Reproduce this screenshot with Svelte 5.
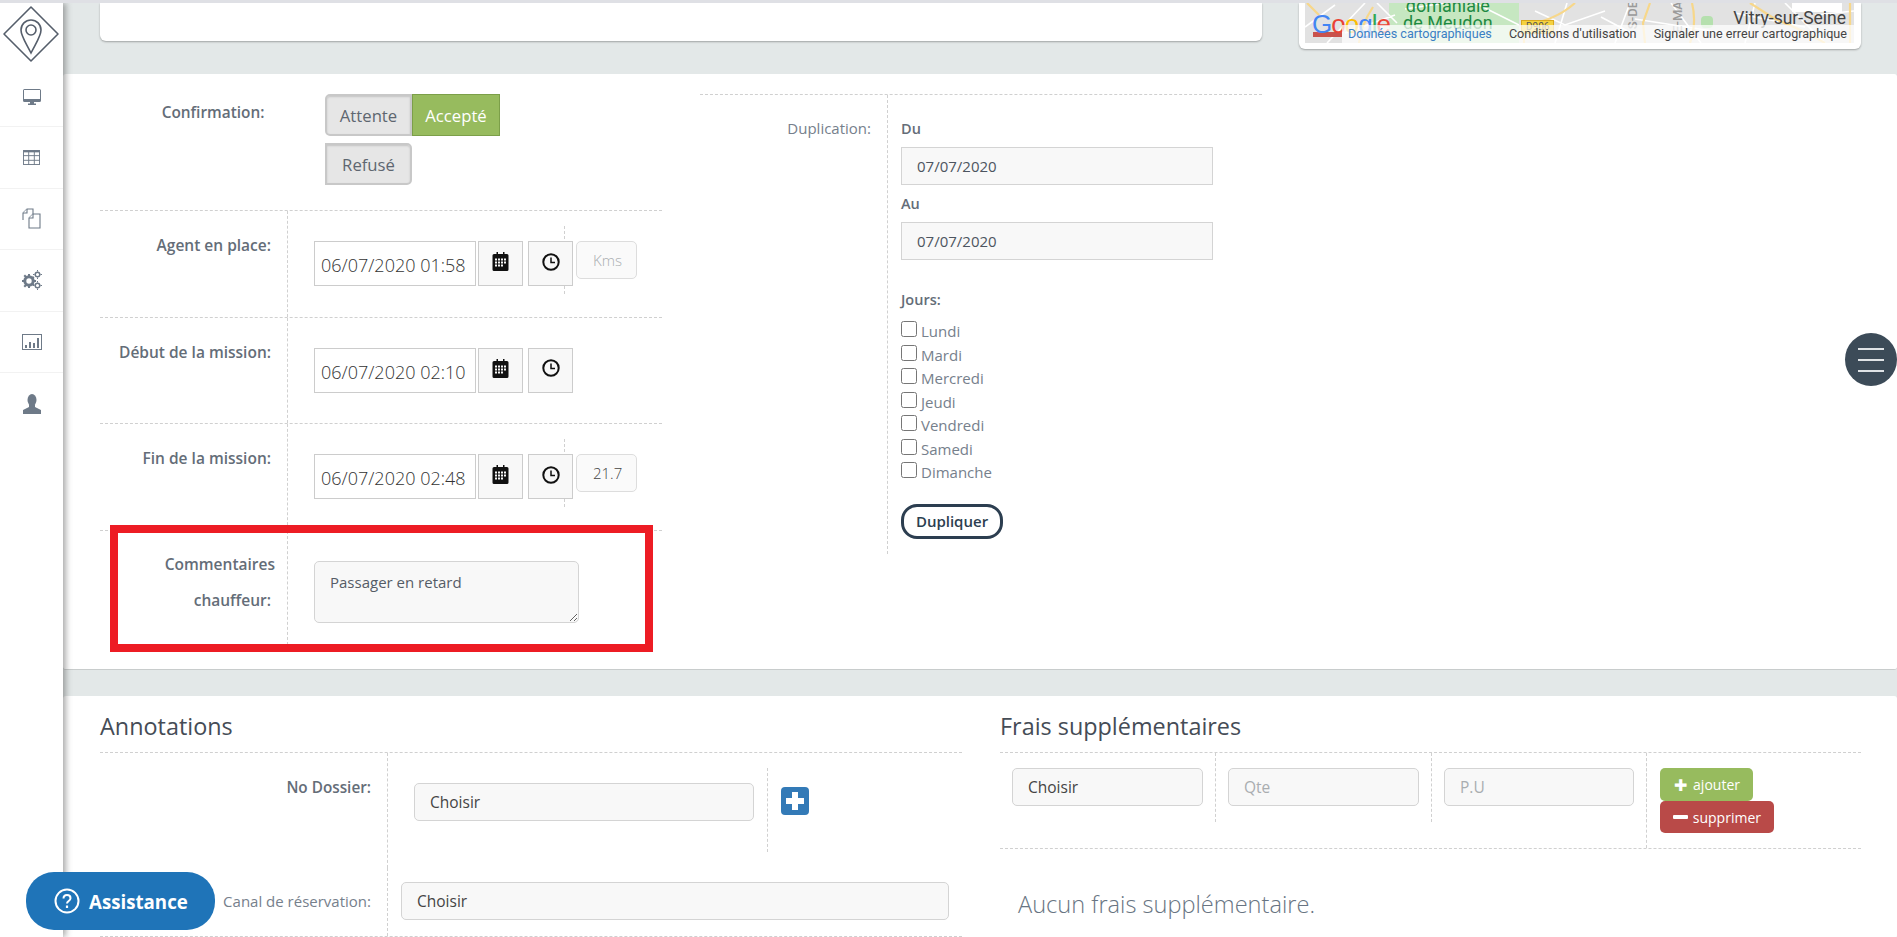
<script>
  const days = ['Lundi', 'Mardi', 'Mercredi', 'Jeudi', 'Vendredi', 'Samedi', 'Dimanche'];
  const missions = [
    { label: 'Agent en place:', value: '06/07/2020 01:58', kms: '', placeholder: 'Kms' },
    { label: 'Début de la mission:', value: '06/07/2020 02:10' },
    { label: 'Fin de la mission:', value: '06/07/2020 02:48', kms: '21.7', placeholder: 'Kms' }
  ];
</script>

<div class="page">
  <nav class="sidebar">
    <div class="logo">
      <svg viewBox="0 0 63 62" width="63" height="62" fill="none" stroke="#555e6b" stroke-width="1.6">
        <path d="M31 4 58 31 31 58 4 31Z" stroke-linejoin="round" />
        <path d="M31 17c-5.500 0-10 4.500-10 10 0 6 5 13 10 23 5-10 10-17 10-23 0-5.500-4.500-10-10-10Z" />
        <circle cx="31" cy="27" r="5" />
      </svg>
    </div>
    <div class="nav-item first">
      <svg viewBox="0 0 18 16" width="18" height="16" fill="#6e7a88">
        <path fill-rule="evenodd" d="M1.500 0h15A1.500 1.500 0 0 1 18 1.500v10a1.500 1.500 0 0 1-1.500 1.500h-15A1.500 1.500 0 0 1 0 11.500v-10A1.500 1.500 0 0 1 1.500 0Zm-.5 1v9h16V1Z" />
        <path d="M7 13h4v1.500h2V16H5v-1.500h2Z" />
      </svg>
    </div>
    <div class="nav-item">
      <svg viewBox="0 0 18 16" width="17" height="15" fill="none" stroke="#6e7a88">
        <rect x=".5" y=".5" width="17" height="15" fill="#fff" />
        <path d="M.5 1.500h17" stroke-width="2" />
        <path d="M6 1v15M12 1v15M0 6h18M0 11h18" />
      </svg>
    </div>
    <div class="nav-item">
      <svg viewBox="0 0 19 21" width="19" height="21" fill="#fff" stroke="#6e7a88" stroke-width="1.1">
        <path d="M1 12V5l4-4h6v5" />
        <path d="M1 5h4V1" />
        <path d="M7 20V10l4-4h7v14Z" />
        <path d="M7 10h4V6" />
      </svg>
    </div>
    <div class="nav-item">
      <svg viewBox="0 0 20 20" width="20" height="20" fill="#6e7a88">
        <circle cx="7" cy="11" r="4.200" fill="none" stroke="#6e7a88" stroke-width="3" />
        <path d="M6 4h2v3H6zM6 15h2v3H6zM0 10h3v2H0zM11 10h3v2h-3zM1.500 6l1.500-1.500 2 2L3.500 8zM9 14l1.500-1.500 2 2L11 16zM1.500 16 3.500 14l1.500 1.500-2 2zM9 8l2-2 1.500 1.500-2 2z" />
        <circle cx="15.500" cy="4.500" r="2.300" fill="none" stroke="#6e7a88" stroke-width="1.500" />
        <circle cx="15.500" cy="15.500" r="2.300" fill="none" stroke="#6e7a88" stroke-width="1.500" />
        <path d="M15 0h1v1.500h-1zM15 7.500h1V9h-1zM11 4h1.500v1H11zM18.500 4H20v1h-1.500zM15 11h1v1.500h-1zM15 18.500h1V20h-1zM11 15h1.500v1H11zM18.500 15H20v1h-1.500z" />
      </svg>
    </div>
    <div class="nav-item">
      <svg viewBox="0 0 20 16" width="20" height="16" fill="#6e7a88">
        <path fill-rule="evenodd" d="M0 0h20v16H0Zm1 1v14h18V1Z" />
        <path d="M3 11h2v3H3zM7 8h2v6H7zM11 9h2v5h-2zM15 4h2v10h-2z" />
      </svg>
    </div>
    <div class="nav-item last">
      <svg viewBox="0 0 20 20" width="20" height="20" fill="#6e7a88">
        <ellipse cx="10" cy="6" rx="4.500" ry="6" />
        <path d="M7 11h6v2l6 3v4H1v-4l6-3Z" />
      </svg>
    </div>
  </nav>

  <main class="content">
    <div class="top">
      <div class="top-card"></div>
      <div class="map-card">
        <div class="map">
          <svg viewBox="0 0 549 40" width="549" height="40">
            <rect width="549" height="40" fill="#e2e2e2" />
            <rect x="84" width="130" height="40" fill="#c6e7c1" />
            <rect x="396" y="13" width="12" height="12" rx="4" fill="#b5e0ae" />
            <g fill="none" stroke="#fff" stroke-width="1.600">
              <path d="M0 24 30 2M22 40 60 0M40 30 90 12M72 0 92 20M100 6 140 0M170 0 214 22M230 8 260 22 300 8M250 40 262 0M310 40 325 0M330 16 420 30M366 0 396 40M430 10 500 24M480 0 520 40M510 12 549 8M296 14 330 32M450 0 440 40" />
            </g>
            <g fill="none" stroke="#f7d78a" stroke-width="2.200">
              <path d="M2 0 14 12M54 40Q56 22 68 4M219 40V22Q250 18 270 0M345 0 338 20 340 40M387 0Q392 20 385 40M445 0 470 16Q500 28 520 40M545 0V40" />
            </g>
            <rect x="8" y="29" width="29" height="5" fill="#c9524c" />
          </svg>
          <span class="map-place wood">domaniale<br />de Meudon</span>
          <span class="map-road">D906</span>
          <span class="map-vert one">S-DE</span>
          <span class="map-vert two">E-MA</span>
          <span class="map-blank"></span>
          <span class="map-place city">Vitry-sur-Seine</span>
          <span class="google"><b class="g-b">G</b><b class="g-r">o</b><b class="g-y">o</b><b class="g-b">g</b><b class="g-g">l</b><b class="g-r">e</b></span>
          <div class="map-links">
            <span class="map-data">Données cartographiques</span>
            <span>Conditions d'utilisation</span>
            <span>Signaler une erreur cartographique</span>
          </div>
        </div>
      </div>
    </div>

    <section class="panel details">
      <div class="col-left">
        <div class="confirm">
          <div class="confirm-label">Confirmation:</div>
          <div class="confirm-btns">
            <button class="toggle">Attente</button><button class="toggle on">Accepté</button>
            <button class="toggle refuse">Refusé</button>
          </div>
        </div>

        {#each missions as m}
          <div class="row">
            <div class="row-label">{m.label}</div>
            <div class="row-body">
              <input class="date" value={m.value} />
              <span class="addon">
                <svg viewBox="0 0 16 19" width="17" height="19">
                  <path d="M1.500 2H4V0h1.500v2h5V0H12v2h2.500A1.500 1.500 0 0 1 16 3.500v14a1.500 1.500 0 0 1-1.500 1.500h-13A1.500 1.500 0 0 1 0 17.500v-14A1.500 1.500 0 0 1 1.500 2Z" fill="#111" />
                  <path d="M2.500 6.500h2v2h-2zM5.500 6.500h2v2h-2zM8.500 6.500h2v2h-2zM11.500 6.500h2v2h-2zM2.500 9.500h2v2h-2zM5.500 9.500h2v2h-2zM8.500 9.500h2v2h-2zM11.500 9.500h2v2h-2zM2.500 12.500h2v2h-2zM5.500 12.500h2v2h-2zM8.500 12.500h2v2h-2z" fill="#f8f8f8" />
                </svg>
              </span>
              <span class="addon clock">
                <svg viewBox="0 0 18 18" width="18" height="18" fill="none" stroke="#111">
                  <circle cx="9" cy="9" r="7.700" stroke-width="2" />
                  <path d="M9 4.500V9.500H13" stroke-width="1.500" />
                </svg>
              </span>
              {#if m.placeholder}
                <span class="km-cell">
                  <input class="kms" placeholder={m.placeholder} value={m.kms} />
                </span>
              {/if}
            </div>
          </div>
        {/each}

        <div class="row comment">
          <div class="row-label"><span class="over">Commentaires</span><br />chauffeur:</div>
          <div class="row-body">
            <textarea class="comment-box">Passager en retard</textarea>
          </div>
        </div>
      </div>

      <div class="col-right">
        <div class="dup-label">Duplication:</div>
        <div class="dup-body">
          <div class="dup-title">Du</div>
          <input class="dup-date" value="07/07/2020" />
          <div class="dup-title au">Au</div>
          <input class="dup-date" value="07/07/2020" />
          <div class="dup-title jours">Jours:</div>
          <div class="days">
            {#each days as day}
              <label class="day"><input type="checkbox" />{day}</label>
            {/each}
          </div>
          <button class="dup-btn">Dupliquer</button>
        </div>
      </div>

      <div class="red-mark"></div>
    </section>

    <div class="gap"></div>

    <section class="panel bottom">
      <div class="annotations">
        <h2>Annotations</h2>
        <div class="note-row first-note">
          <div class="note-label strong">No Dossier:</div>
          <div class="note-body">
            <select class="pick dossier"><option>Choisir</option></select>
            <span class="plus-cell">
              <svg viewBox="0 0 28 28" width="28" height="28">
                <rect width="28" height="28" rx="4" fill="#337ab7" />
                <path d="M11 5h6v6h6v6h-6v6h-6v-6H5v-6h6Z" fill="#fff" />
              </svg>
            </span>
          </div>
        </div>
        <div class="note-row second-note">
          <div class="note-label">Canal de réservation:</div>
          <div class="note-body">
            <select class="pick canal"><option>Choisir</option></select>
          </div>
        </div>
      </div>

      <div class="fees">
        <h2>Frais supplémentaires</h2>
        <div class="fee-row">
          <div class="fee-cell"><select class="pick"><option>Choisir</option></select></div>
          <div class="fee-cell"><input class="pick" placeholder="Qte" /></div>
          <div class="fee-cell"><input class="pick" placeholder="P.U" /></div>
          <div class="fee-actions">
            <button class="act add"><span class="sign">✚</span>ajouter</button>
            <button class="act del"><span class="sign minus"></span>supprimer</button>
          </div>
        </div>
        <p class="no-fees">Aucun frais supplémentaire.</p>
      </div>
    </section>
  </main>

  <button class="assist">
    <svg viewBox="0 0 26 26" width="26" height="26" fill="none" stroke="#fff">
      <circle cx="13" cy="13" r="11.500" stroke-width="2" />
      <path d="M9.500 10.500c0-2.300 1.500-3.500 3.500-3.500s3.500 1.200 3.500 3.200c0 2.800-3.500 2.800-3.500 5.300" stroke-width="2" />
      <path d="M13 17.500v2.500" stroke-width="2.200" />
    </svg>
    Assistance
  </button>

  <div class="burger"><span></span><span></span><span></span></div>
</div>

<style>
  :global(body) {
    margin: 0;
    overflow: hidden;
  }

  .page {
    position: relative;
    display: flex;
    height: 934px;
    overflow: hidden;
    border-top: 3px solid #dfe0e5;
    background: #e3e8e8;
    color: #646d78;
    font-family: "Open Sans", sans-serif;
    font-size: 15px;
  }

  button, input, select, textarea {
    font-family: inherit;
    box-sizing: border-box;
  }

  input::placeholder {
    color: #a9adb0;
  }

  /* sidebar */
  .sidebar {
    position: relative;
    z-index: 2;
    flex: none;
    width: 63px;
    background: #fff;
    box-shadow: 3px 0 6px rgba(70, 70, 70, 0.45);
  }

  .logo {
    height: 64px;
  }

  .nav-item {
    display: flex;
    align-items: center;
    justify-content: center;
    height: 61.500px;
    border-bottom: 1px solid #f2f2f2;
    box-sizing: border-box;
  }

  .nav-item.first {
    height: 60px;
  }

  .nav-item.last {
    border-bottom: 0;
  }

  /* top strip */
  .content {
    flex: 1;
    min-width: 0;
  }

  .top {
    display: flex;
    gap: 37px;
    height: 71px;
    padding-left: 37px;
    box-sizing: border-box;
  }

  .top-card {
    width: 1162px;
    height: 38px;
    background: #fff;
    border-radius: 0 0 6px 6px;
    box-shadow: 0 1px 2px rgba(0, 0, 0, 0.3);
  }

  .map-card {
    width: 562px;
    height: 46px;
    padding: 0 6px;
    box-sizing: border-box;
    background: #fff;
    border-radius: 0 0 6px 6px;
    box-shadow: 0 1px 2px rgba(0, 0, 0, 0.3);
  }

  .map {
    position: relative;
    width: 549px;
    height: 40px;
    overflow: hidden;
    font-family: Roboto, sans-serif;
  }

  .map svg {
    display: block;
  }

  .map-place {
    position: absolute;
    white-space: nowrap;
  }

  .wood {
    left: 98px;
    top: -5px;
    color: #1e8a43;
    font-size: 18px;
    line-height: 16.500px;
    text-align: center;
  }

  .city {
    right: 8px;
    top: 5px;
    color: #444;
    font-size: 17.500px;
    line-height: 20px;
  }

  .map-road {
    position: absolute;
    left: 216px;
    top: 17px;
    padding: 0 4px;
    background: #f5d23f;
    border: 1px solid #d9a81e;
    color: #555;
    font-size: 10px;
    line-height: 12px;
  }

  .map-vert {
    position: absolute;
    top: -2px;
    color: #9a9a9a;
    font-size: 13px;
    font-weight: 500;
    line-height: 13px;
    writing-mode: vertical-rl;
    transform: rotate(180deg);
  }

  .map-vert.one {
    left: 321px;
  }

  .map-vert.two {
    left: 366px;
  }

  .map-blank {
    position: absolute;
    right: 12px;
    top: 0;
    width: 50px;
    height: 9px;
    background: #fff;
  }

  .google {
    position: absolute;
    left: 7px;
    top: 6px;
    font-family: "Liberation Sans", sans-serif;
    font-size: 26px;
    line-height: 30px;
    letter-spacing: -1px;
  }

  .google b {
    font-weight: 400;
  }

  .g-b { color: #4285f4; }
  .g-r { color: #ea4335; }
  .g-y { color: #fbbc05; }
  .g-g { color: #34a853; }

  .map-links {
    position: absolute;
    left: 37px;
    right: 0;
    bottom: 0;
    display: flex;
    justify-content: space-between;
    height: 18px;
    padding: 0 7px 0 6px;
    box-sizing: border-box;
    background: rgba(255, 255, 255, 0.72);
    color: #444;
    font-size: 12.600px;
    line-height: 18px;
    white-space: nowrap;
  }

  .map-data {
    color: #3a7fc4;
  }

  /* main panel */
  .panel {
    background: #fff;
    box-sizing: border-box;
  }

  .details {
    position: relative;
    display: flex;
    gap: 38px;
    height: 596px;
    padding: 20px 0 0 37px;
    border-bottom: 1px solid #c8cccc;
    border-radius: 3px;
  }

  .col-left {
    width: 562px;
  }

  .confirm {
    display: grid;
    grid-template-columns: 164.500px 1fr;
    height: 116px;
    border-bottom: 1px dashed #d0d0d0;
  }

  .confirm-label {
    padding-top: 9px;
    text-align: right;
    font-size: 15.400px;
    font-weight: 600;
    line-height: 20px;
  }

  .confirm-btns {
    padding-left: 60.500px;
    width: 180px;
    font-size: 0;
  }

  .toggle {
    width: 87px;
    height: 42px;
    padding: 0;
    background: #e6e6e6;
    border: 2px solid #c8c8c8;
    border-radius: 5px 0 0 5px;
    box-shadow: inset 0 1px 2px rgba(0, 0, 0, 0.15);
    color: #5e6670;
    font-size: 16.700px;
    vertical-align: top;
  }

  .toggle.on {
    width: 88px;
    background: #97bb5e;
    border: 1px solid #7c9f49;
    border-radius: 0;
    box-shadow: none;
    color: #fff;
  }

  .toggle.refuse {
    margin-top: 7px;
    border-radius: 0 5px 5px 0;
  }

  .row {
    display: grid;
    grid-template-columns: 187px 1fr;
    height: 106.500px;
    box-sizing: border-box;
    border-bottom: 1px dashed #d0d0d0;
  }

  .row.comment {
    height: 114px;
    border-bottom: 0;
  }

  .row-label {
    padding: 24px 16px 0 0;
    text-align: right;
    font-size: 15.500px;
    font-weight: 600;
    line-height: 20px;
    color: #646d78;
  }

  .comment .row-label {
    padding: 15px 16px 0 0;
    line-height: 36px;
  }

  .over {
    margin-right: -4px;
  }

  .row-body {
    display: flex;
    align-items: flex-start;
    padding: 30px 0 0 26px;
    border-left: 1px dashed #d0d0d0;
  }

  .date {
    width: 162px;
    height: 45px;
    padding: 3px 0 0 6px;
    background: #fff;
    border: 1px solid #ccc;
    color: #333;
    font-size: 18px;
    font-weight: 300;
  }

  .addon {
    position: relative;
    z-index: 1;
    display: flex;
    align-items: center;
    justify-content: center;
    width: 45px;
    height: 45px;
    margin-left: 2px;
    padding-bottom: 4px;
    box-sizing: border-box;
    background: #f8f8f8;
    border: 1px solid #ccc;
  }

  .addon.clock {
    margin-left: 5px;
  }

  .km-cell {
    display: flex;
    align-items: flex-start;
    position: relative;
    margin-left: 3px;
  }

  .km-cell::before {
    content: "";
    position: absolute;
    left: -12px;
    top: -15px;
    height: 68px;
    border-left: 1px dashed #d0d0d0;
    z-index: 0;
  }

  .kms {
    position: relative;
    width: 61px;
    height: 38px;
    padding: 0 0 0 16px;
    background: #fafafa;
    border: 1px solid #ddd;
    border-radius: 5px;
    color: #444;
    font-size: 15px;
    font-weight: 300;
  }

  .comment-box {
    display: block;
    width: 265px;
    height: 62px;
    padding: 10px 15px;
    background: #f8f8f8;
    border: 1px solid #d4d4d4;
    border-radius: 5px;
    color: #555c66;
    font-size: 15px;
    outline: none;
  }

  .col-right {
    display: grid;
    grid-template-columns: 187px 1fr;
    align-self: flex-start;
    width: 562px;
    border-top: 1px dashed #d0d0d0;
  }

  .dup-label {
    padding: 23px 16px 0 0;
    text-align: right;
    color: #76808c;
    line-height: 20px;
  }

  .dup-body {
    height: 459px;
    padding: 24px 0 0 13px;
    border-left: 1px dashed #d0d0d0;
    box-sizing: border-box;
  }

  .dup-title {
    font-weight: 600;
    font-size: 14.500px;
    line-height: 20px;
    color: #646d78;
  }

  .dup-title.au {
    margin-top: 9px;
  }

  .dup-title.jours {
    margin-top: 30px;
  }

  .dup-date {
    display: block;
    width: 312px;
    height: 38px;
    margin-top: 8px;
    padding: 0 15px;
    background: #f8f8f8;
    border: 1px solid #d4d4d4;
    color: #4d5560;
    font-size: 15px;
  }

  .days {
    margin-top: 11px;
  }

  .day {
    display: flex;
    align-items: flex-start;
    height: 23.500px;
    color: #76808c;
    line-height: 20px;
  }

  .day input {
    width: 16px;
    height: 16px;
    margin: 0 4px 0 0;
  }

  .dup-btn {
    width: 102px;
    height: 35px;
    margin-top: 18px;
    padding: 0;
    background: #fff;
    border: 3px solid #2c3e50;
    border-radius: 16px;
    color: #2c3e50;
    font-size: 15px;
    font-weight: 600;
  }

  .red-mark {
    position: absolute;
    left: 47px;
    top: 451px;
    width: 543px;
    height: 127px;
    box-sizing: border-box;
    border: 8px solid #ed1c24;
  }

  .gap {
    height: 26px;
  }

  /* bottom panel */
  .bottom {
    display: flex;
    gap: 38px;
    height: 242px;
    padding-left: 37px;
    border-radius: 3px;
  }

  h2 {
    margin: 0;
    height: 57px;
    padding-top: 14px;
    box-sizing: border-box;
    border-bottom: 1px dashed #d0d0d0;
    color: #454c56;
    font-size: 23.400px;
    font-weight: 400;
    line-height: 32px;
  }

  .annotations {
    width: 862px;
  }

  .fees {
    width: 861px;
  }

  .note-row {
    display: grid;
    grid-template-columns: 287px 1fr;
  }

  .first-note {
    height: 115px;
  }

  .second-note {
    height: 68px;
    border-bottom: 1px dashed #d0d0d0;
  }

  .note-label {
    padding-right: 16px;
    text-align: right;
    line-height: 20px;
    color: #76808c;
  }

  .note-label.strong {
    padding-top: 24px;
    font-size: 15.300px;
    font-weight: 600;
    color: #646d78;
  }

  .second-note .note-label {
    padding-top: 23px;
  }

  .note-body {
    display: flex;
    align-items: flex-start;
    border-left: 1px dashed #d0d0d0;
  }

  .pick {
    display: block;
    width: 100%;
    height: 38px;
    padding: 0 15px;
    appearance: none;
    -webkit-appearance: none;
    background: #f8f8f8;
    border: 1px solid #d4d4d4;
    border-radius: 5px;
    color: #444;
    font-size: 15.500px;
  }

  .pick.dossier {
    width: 340px;
    margin: 30px 0 0 26px;
  }

  .plus-cell {
    display: block;
    height: 84px;
    margin: 15px 0 0 13px;
    padding: 19px 0 0 13px;
    border-left: 1px dashed #d0d0d0;
    box-sizing: border-box;
  }

  .plus-cell svg {
    display: block;
  }

  .pick.canal {
    width: 548px;
    margin: 14px 0 0 13px;
  }

  .fee-row {
    display: grid;
    grid-template-columns: 216px 216px 215px 1fr;
    height: 95px;
    border-bottom: 1px dashed #d0d0d0;
  }

  .fee-cell {
    height: 69px;
    padding: 15px 12px 0 12px;
    box-sizing: border-box;
    border-right: 1px dashed #d0d0d0;
  }

  .fee-actions {
    display: flex;
    flex-direction: column;
    align-items: flex-start;
    padding: 15px 0 0 13px;
    border-left: 1px dashed #d0d0d0;
    margin-left: -1px;
  }

  .act {
    display: flex;
    align-items: center;
    height: 33px;
    padding: 0 13px;
    border: 0;
    border-radius: 5px;
    color: #fff;
    font-size: 14px;
  }

  .act.add {
    width: 93px;
    background: #97bb5e;
  }

  .act.del {
    width: 114px;
    height: 32px;
    background: #b94a48;
  }

  .sign {
    width: 16px;
    margin-right: 5px;
    font-size: 16px;
    line-height: 1;
  }

  .sign.minus {
    height: 4px;
    background: #fff;
    border-radius: 1px;
  }

  .no-fees {
    margin: 41px 0 0 18px;
    color: #687482;
    font-size: 23.600px;
    font-weight: 300;
    line-height: 28px;
  }

  /* floating */
  .assist {
    position: absolute;
    left: 26px;
    top: 869px;
    z-index: 3;
    display: flex;
    align-items: center;
    gap: 9px;
    width: 189px;
    height: 58px;
    padding: 0 0 0 28px;
    background: #1f74b8;
    border: 0;
    border-radius: 28px;
    color: #fff;
    font-size: 18.700px;
    font-weight: 700;
  }

  .burger {
    position: absolute;
    left: 1845px;
    top: 330px;
    display: flex;
    flex-direction: column;
    justify-content: center;
    gap: 9px;
    width: 52px;
    height: 53px;
    padding: 0 13px;
    box-sizing: border-box;
    background: #3c4b58;
    border-radius: 50%;
  }

  .burger span {
    height: 2px;
    background: #dfe3e6;
  }
</style>
